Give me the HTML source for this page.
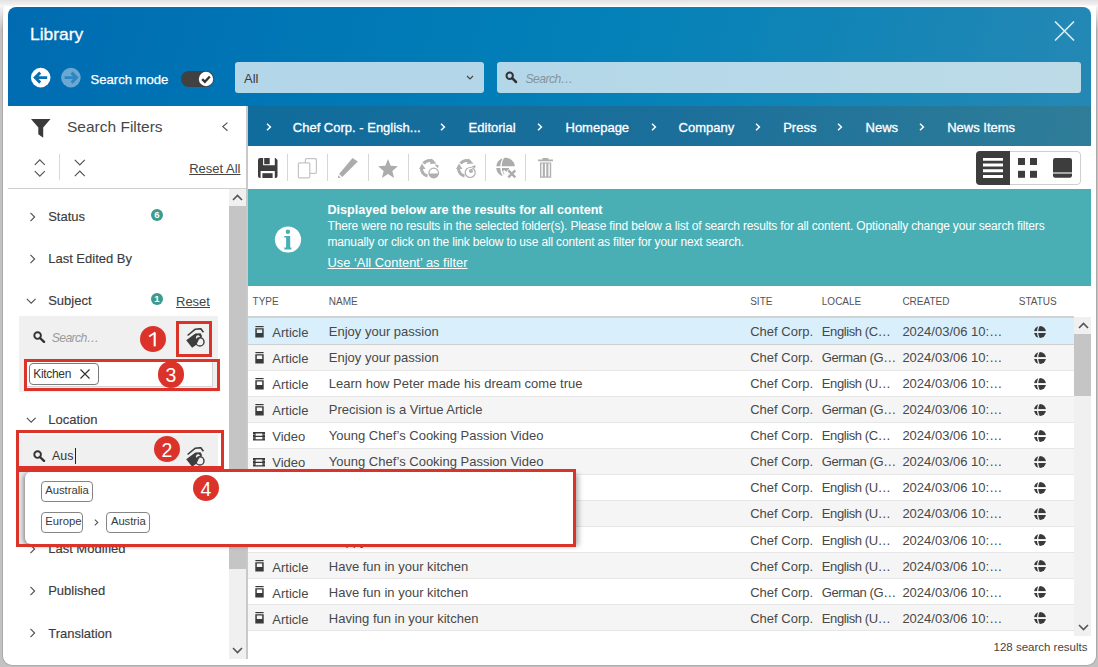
<!DOCTYPE html>
<html><head><meta charset="utf-8">
<style>
*{margin:0;padding:0;box-sizing:border-box}
html,body{width:1098px;height:667px;overflow:hidden;background:#c2c2c2;font-family:"Liberation Sans",sans-serif;color:#444}
.a{position:absolute}
.t{position:absolute;line-height:1;white-space:nowrap}
#frame{left:3px;top:-6px;width:1093px;height:670.5px;background:#fff;border-radius:9px;box-shadow:0 0 0 0.8px #a4a4a4}
#ftop{left:0;top:0;width:1098px;height:7px;background:linear-gradient(#e2e2e2,#ececec 45%,#f3f3f3 75%,#fff 90%)}
#hdr{left:8px;top:7px;width:1083px;height:99px;border-radius:8px 8px 0 0;background:linear-gradient(105deg,#006bb1 0%,#0078b6 30%,#0381b8 55%,#1585b6 80%,#2588b4 100%)}
#side{left:8px;top:106px;width:238px;height:553px;background:#fff}
#sideb{left:246px;top:106px;width:2px;height:553px;background:#c9c9c9}
#crumb{left:248px;top:106px;width:843px;height:40.5px;background:linear-gradient(100deg,#106c9c 0%,#1b6f9a 50%,#2f7d98 100%)}
#tool{left:248px;top:146px;width:843px;height:43px;background:#fff}
#banner{left:248px;top:189px;width:843px;height:97px;background:#49afb5}
.crumbt{color:#fff;font-size:13px;-webkit-text-stroke:0.3px #fff}
.hd{font-size:10px;color:#555}
.row{position:absolute;left:248px;width:826px;height:26px;border-bottom:1px solid #e6e6e6}
.rt{font-size:13px;color:#484848}
.sitem{font-size:13px;color:#3c3c3c;-webkit-text-stroke:0.15px #3c3c3c}
.red{position:absolute;border:3px solid #db3329}
.num{position:absolute;width:26.4px;height:26.4px;border-radius:13.2px;background:#db3329;color:#fff;font-size:19.5px;line-height:28px;text-align:center;font-weight:normal}
</style></head><body>
<div id="frame" class="a"></div><div id="ftop" class="a"></div><div class="a" style="left:0;top:6px;width:3.5px;height:24px;background:linear-gradient(#f4f4f4,rgba(244,244,244,0))"></div><div class="a" style="left:1095.5px;top:6px;width:2.5px;height:24px;background:linear-gradient(#f4f4f4,rgba(244,244,244,0))"></div>
<svg class="a" width="0" height="0" style="left:0;top:0"><defs><mask id="gm" maskUnits="userSpaceOnUse" x="0" y="0" width="12" height="12"><circle cx="6" cy="6" r="6" fill="#fff"/><rect x="0" y="5.1" width="12" height="1.9" fill="#000"/><path d="M5.1 -0.3Q2.0 6 5.1 12.3" stroke="#000" stroke-width="1.2" fill="none"/></mask></defs></svg>
<div id="hdr" class="a"></div>
<div class="t" style="left:30px;top:25.5px;font-size:17.4px;color:#fff;-webkit-text-stroke:0.3px #fff">Library</div>
<svg class="a" style="left:1054px;top:21px" width="21" height="20" viewBox="0 0 21 20"><path d="M1 0.5L20 19.5M20 0.5L1 19.5" stroke="#dcebf3" stroke-width="1.6"/></svg>
<svg class="a" style="left:30px;top:67px" width="22" height="22" viewBox="0 0 22 22"><circle cx="10.7" cy="10.6" r="9.8" fill="#fff"/><path d="M17.2 10.6H6M10.2 5.6L5.2 10.6L10.2 15.6" stroke="#0a70b2" stroke-width="2.9" fill="none" stroke-linejoin="miter"/></svg>
<svg class="a" style="left:60px;top:67px" width="22" height="22" viewBox="0 0 22 22"><circle cx="10.9" cy="10.6" r="9.8" fill="#6aa8d3"/><path d="M4.6 10.6H15.8M11.6 5.6L16.6 10.6L11.6 15.6" stroke="#2b86c2" stroke-width="2.9" fill="none"/></svg>
<div class="t" style="left:90.5px;top:73px;font-size:13.1px;color:#fff;-webkit-text-stroke:0.25px #fff">Search mode</div>
<div class="a" style="left:181px;top:71px;width:33px;height:16px;border-radius:8px;background:#414141"></div>
<svg class="a" style="left:198px;top:71px" width="16" height="16" viewBox="0 0 16 16"><circle cx="8" cy="8" r="7.2" fill="#fff"/><path d="M4.2 8.1L6.9 10.8L11.8 5.5" stroke="#333" stroke-width="2.3" fill="none"/></svg>
<div class="a" style="left:235px;top:62px;width:249px;height:31px;border-radius:3px;background:#b3d7e9"></div>
<div class="t" style="left:244px;top:72px;font-size:13px;color:#3a3a3a">All</div>
<svg class="a" style="left:466px;top:74.5px" width="8" height="6" viewBox="0 0 8 6"><path d="M1 1L4 4L7 1" stroke="#444" stroke-width="1.2" fill="none"/></svg>
<div class="a" style="left:497px;top:62px;width:584px;height:31px;border-radius:3px;background:linear-gradient(90deg,#b3d7e9,#bddbe7)"></div>
<svg class="a" style="left:504.5px;top:70.5px" width="13" height="13" viewBox="0 0 13 13"><circle cx="4.7" cy="4.7" r="3.2" stroke="#333" stroke-width="2" fill="none"/><path d="M7.2 7.2L11 11" stroke="#333" stroke-width="2.5" stroke-linecap="round"/></svg>
<div class="t" style="left:525.5px;top:72.8px;font-size:12.2px;letter-spacing:-0.55px;color:#85939b;font-style:italic">Search…</div>
<div id="side" class="a"></div>
<div id="sideb" class="a"></div>
<svg class="a" style="left:31px;top:119px" width="20" height="19" viewBox="0 0 20 19"><path fill="#3a3a3a" d="M0 0H19.5L12.2 8.6V18.8L7.3 15.2V8.6Z"/></svg>
<div class="t" style="left:67px;top:118.7px;font-size:15.5px;color:#474747">Search Filters</div>
<svg class="a" style="left:221px;top:122px" width="8" height="10" viewBox="0 0 8 10"><path d="M6.5 0.6L1.8 4.6L6.5 8.8" stroke="#555" stroke-width="1.2" fill="none"/></svg>
<svg class="a" style="left:34px;top:158px" width="12" height="20" viewBox="0 0 12 20"><path d="M0.8 6.8L5.8 1.8L10.8 6.8M0.8 13.2L5.8 18.2L10.8 13.2" stroke="#555" stroke-width="1.2" fill="none"/></svg>
<div class="a" style="left:59px;top:154px;width:1px;height:26px;background:#d8d8d8"></div>
<svg class="a" style="left:74px;top:158px" width="12" height="20" viewBox="0 0 12 20"><path d="M0.8 1.8L5.8 6.8L10.8 1.8M0.8 18.2L5.8 13.2L10.8 18.2" stroke="#555" stroke-width="1.2" fill="none"/></svg>
<div class="t" style="left:189.2px;top:162px;font-size:13px;color:#444;text-decoration:underline">Reset All</div>
<div class="a" style="left:8px;top:188px;width:238px;height:1px;background:#cfcfcf"></div>
<div class="a" style="left:229px;top:189px;width:17px;height:470px;background:#f0f0f0"></div>
<div class="a" style="left:229px;top:206px;width:17px;height:363px;background:#c5c5c5"></div>
<svg class="a" style="left:232px;top:193px" width="11" height="9" viewBox="0 0 11 9"><path d="M1 7L5.5 2.5L10 7" stroke="#555" stroke-width="1.6" fill="none"/></svg>
<svg class="a" style="left:232px;top:646px" width="11" height="9" viewBox="0 0 11 9"><path d="M1 2L5.5 6.5L10 2" stroke="#555" stroke-width="1.6" fill="none"/></svg>
<svg class="a" style="left:28.5px;top:212.0px" width="8" height="10" viewBox="0 0 8 10"><path d="M1.5 0.8L5.6 5L1.5 9.2" stroke="#555" stroke-width="1.2" fill="none"/></svg><div class="t sitem" style="left:48.2px;top:210.2px">Status</div><div class="a" style="left:151px;top:209px;width:12px;height:12px;border-radius:6px;background:#3c9a8f;color:#fff;font-size:9.6px;font-weight:bold;line-height:12.6px;text-align:center">6</div><svg class="a" style="left:28.5px;top:254.0px" width="8" height="10" viewBox="0 0 8 10"><path d="M1.5 0.8L5.6 5L1.5 9.2" stroke="#555" stroke-width="1.2" fill="none"/></svg><div class="t sitem" style="left:48.2px;top:252.2px">Last Edited By</div><svg class="a" style="left:26.3px;top:297.5px" width="11" height="7" viewBox="0 0 11 7"><path d="M0.8 0.8L5.2 5.2L9.6 0.8" stroke="#555" stroke-width="1.2" fill="none"/></svg><div class="t sitem" style="left:48.2px;top:294.2px">Subject</div><div class="a" style="left:151px;top:293.2px;width:12px;height:12px;border-radius:6px;background:#3c9a8f;color:#fff;font-size:9.6px;font-weight:bold;line-height:12.6px;text-align:center">1</div><div class="t" style="left:176px;top:294.6px;font-size:13px;color:#444;text-decoration:underline">Reset</div><div class="a" style="left:19px;top:316px;width:199px;height:76px;background:#f0f0f0"></div><svg class="a" style="left:33.0px;top:331.0px" width="13" height="12" viewBox="0 0 13 12"><circle cx="4.6" cy="4.6" r="3.3" stroke="#333" stroke-width="1.9" fill="none"/><path d="M7 7L11 10.8" stroke="#333" stroke-width="2.4" stroke-linecap="round"/></svg><div class="t" style="left:51.7px;top:331.6px;font-size:12.2px;letter-spacing:-0.6px;font-style:italic;color:#9a9a9a">Search…</div><svg class="a" style="left:185.7px;top:328.0px" width="22" height="22" viewBox="0 0 22 22"><path d="M1.6 7.5L9.3 1.2L14.8 0.7L17.4 4.3" stroke="#3d3d3d" stroke-width="1.6" fill="none" stroke-linejoin="round"/><path fill="#3d3d3d" fill-rule="evenodd" d="M0.2 12.2L9.3 5.4L14.6 5.2L16.2 8.2L11.2 12.5L10 17L6.1 19.7Z M12 7.3A2.1 2.3 0 1 0 12.01 7.3Z"/><circle cx="13.9" cy="13.9" r="4.1" fill="none" stroke="#3d3d3d" stroke-width="1.4"/><path d="M10.2 15.5L12.6 10.2" stroke="#3d3d3d" stroke-width="1.6"/></svg><div class="a" style="left:27px;top:362px;width:186px;height:25px;background:#fff;border-bottom:1px solid #d4d4d4;border-right:1px solid #d4d4d4"></div><div class="a" style="left:29px;top:363px;width:70px;height:22px;border:1px solid #7a7a7a;border-radius:4px;background:#fff"></div><div class="t" style="left:33.2px;top:367.8px;font-size:12px;letter-spacing:-0.3px;color:#333">Kitchen</div><svg class="a" style="left:80px;top:369px" width="10" height="10" viewBox="0 0 10 10"><path d="M0.5 0.5L9.5 9.5M9.5 0.5L0.5 9.5" stroke="#333" stroke-width="1.2"/></svg><svg class="a" style="left:26.3px;top:417.0px" width="11" height="7" viewBox="0 0 11 7"><path d="M0.8 0.8L5.2 5.2L9.6 0.8" stroke="#555" stroke-width="1.2" fill="none"/></svg><div class="t sitem" style="left:48.3px;top:413px">Location</div><div class="a" style="left:19px;top:434.5px;width:199px;height:34px;background:#f0f0f0"></div><svg class="a" style="left:33.0px;top:450.0px" width="13" height="12" viewBox="0 0 13 12"><circle cx="4.6" cy="4.6" r="3.3" stroke="#333" stroke-width="1.9" fill="none"/><path d="M7 7L11 10.8" stroke="#333" stroke-width="2.4" stroke-linecap="round"/></svg><div class="t" style="left:52px;top:450.3px;font-size:12.4px;color:#333">Aus</div><div class="a" style="left:74.5px;top:448px;width:1px;height:15.5px;background:#222"></div><svg class="a" style="left:185.7px;top:447.0px" width="22" height="22" viewBox="0 0 22 22"><path d="M1.6 7.5L9.3 1.2L14.8 0.7L17.4 4.3" stroke="#3d3d3d" stroke-width="1.6" fill="none" stroke-linejoin="round"/><path fill="#3d3d3d" fill-rule="evenodd" d="M0.2 12.2L9.3 5.4L14.6 5.2L16.2 8.2L11.2 12.5L10 17L6.1 19.7Z M12 7.3A2.1 2.3 0 1 0 12.01 7.3Z"/><circle cx="13.9" cy="13.9" r="4.1" fill="none" stroke="#3d3d3d" stroke-width="1.4"/><path d="M10.2 15.5L12.6 10.2" stroke="#3d3d3d" stroke-width="1.6"/></svg><svg class="a" style="left:28.5px;top:544.0px" width="8" height="10" viewBox="0 0 8 10"><path d="M1.5 0.8L5.6 5L1.5 9.2" stroke="#555" stroke-width="1.2" fill="none"/></svg><div class="t sitem" style="left:48.2px;top:542px">Last Modified</div><svg class="a" style="left:28.5px;top:586.0px" width="8" height="10" viewBox="0 0 8 10"><path d="M1.5 0.8L5.6 5L1.5 9.2" stroke="#555" stroke-width="1.2" fill="none"/></svg><div class="t sitem" style="left:48.2px;top:584px">Published</div><svg class="a" style="left:28.5px;top:627.6px" width="8" height="10" viewBox="0 0 8 10"><path d="M1.5 0.8L5.6 5L1.5 9.2" stroke="#555" stroke-width="1.2" fill="none"/></svg><div class="t sitem" style="left:48.2px;top:626.5px">Translation</div>
<div id="crumb" class="a"></div>
<div id="tool" class="a"></div>
<div id="banner" class="a"></div>
<svg class="a" style="left:265.5px;top:123px" width="6" height="8" viewBox="0 0 6 8"><path d="M1 0.8L4.4 4L1 7.2" stroke="#fff" stroke-width="1.5" fill="none"/></svg>
<div class="t crumbt" style="left:292.8px;top:121.3px">Chef Corp. - English...</div>
<svg class="a" style="left:440.0px;top:123px" width="6" height="8" viewBox="0 0 6 8"><path d="M1 0.8L4.4 4L1 7.2" stroke="#fff" stroke-width="1.5" fill="none"/></svg>
<div class="t crumbt" style="left:468.6px;top:121.3px">Editorial</div>
<svg class="a" style="left:536.7px;top:123px" width="6" height="8" viewBox="0 0 6 8"><path d="M1 0.8L4.4 4L1 7.2" stroke="#fff" stroke-width="1.5" fill="none"/></svg>
<div class="t crumbt" style="left:565.5px;top:121.3px">Homepage</div>
<svg class="a" style="left:650.7px;top:123px" width="6" height="8" viewBox="0 0 6 8"><path d="M1 0.8L4.4 4L1 7.2" stroke="#fff" stroke-width="1.5" fill="none"/></svg>
<div class="t crumbt" style="left:678.6px;top:121.3px">Company</div>
<svg class="a" style="left:755.3px;top:123px" width="6" height="8" viewBox="0 0 6 8"><path d="M1 0.8L4.4 4L1 7.2" stroke="#fff" stroke-width="1.5" fill="none"/></svg>
<div class="t crumbt" style="left:783.2px;top:121.3px">Press</div>
<svg class="a" style="left:836.5px;top:123px" width="6" height="8" viewBox="0 0 6 8"><path d="M1 0.8L4.4 4L1 7.2" stroke="#fff" stroke-width="1.5" fill="none"/></svg>
<div class="t crumbt" style="left:865.6px;top:121.3px">News</div>
<svg class="a" style="left:919.0px;top:123px" width="6" height="8" viewBox="0 0 6 8"><path d="M1 0.8L4.4 4L1 7.2" stroke="#fff" stroke-width="1.5" fill="none"/></svg>
<div class="t crumbt" style="left:947.2px;top:121.3px">News Items</div>
<svg class="a" style="left:258px;top:158px" width="20" height="20" viewBox="0 0 20 20"><path fill="#3d3d3d" fill-rule="evenodd" d="M2 0H17.5L19.5 2V18A2 2 0 0 1 17.5 20H2A2 2 0 0 1 0 18V2A2 2 0 0 1 2 0ZM5.1 0V7.3H16.8V0ZM2.6 13.1V20H16.8V13.1Z"/><rect x="6.2" y="0" width="5.5" height="6.2" fill="#3d3d3d"/><rect x="4.4" y="15.2" width="10.2" height="4.8" fill="#3d3d3d"/></svg>
<div class="a" style="left:287px;top:154px;width:1px;height:27px;background:#d6d6d6"></div>
<svg class="a" style="left:297px;top:157px" width="22" height="22" viewBox="0 0 22 22"><rect x="8.4" y="1.6" width="11" height="14.8" rx="1.2" fill="#fff" stroke="#c4c4c4" stroke-width="1.2"/><rect x="1.4" y="5.9" width="11.4" height="15" rx="1.2" fill="#fff" stroke="#c4c4c4" stroke-width="1.2"/></svg>
<div class="a" style="left:327px;top:154px;width:1px;height:27px;background:#d6d6d6"></div>
<svg class="a" style="left:338px;top:158px" width="20" height="20" viewBox="0 0 20 20"><path fill="#acacac" d="M14.5 0L19.8 3.4L4.3 18.9L1.1 16.1Z"/><path fill="#acacac" d="M0.2 17.2L2.8 19.8L0 20Z"/></svg>
<div class="a" style="left:368px;top:154px;width:1px;height:27px;background:#d6d6d6"></div>
<svg class="a" style="left:378px;top:158px" width="20" height="20" viewBox="0 0 20 20"><path fill="#acacac" d="M10.00 1.10L12.70 7.78L19.89 8.29L14.37 12.92L16.11 19.91L10.00 16.10L3.89 19.91L5.63 12.92L0.11 8.29L7.30 7.78Z"/></svg>
<div class="a" style="left:408px;top:154px;width:1px;height:27px;background:#d6d6d6"></div>
<svg class="a" style="left:419px;top:158px" width="21" height="21" viewBox="0 0 21 21"><path d="M4.5 5.5A7.5 7.5 0 0 1 14 3.5" stroke="#b0b0b0" stroke-width="3" fill="none"/><path d="M12.5 0.5L17.5 5.5L11 6Z" fill="#b0b0b0"/><path d="M8.5 18A7.5 7.5 0 0 1 2.5 10" stroke="#b0b0b0" stroke-width="3" fill="none"/><path d="M0 11L3 5.5L6.5 11Z" fill="#b0b0b0"/><circle cx="14.7" cy="15" r="4.8" fill="#fff" stroke="#b0b0b0" stroke-width="1.2"/><path d="M10 15.5A4.7 4.7 0 0 0 19.4 15.5Z" fill="#b0b0b0"/><path d="M15.5 6.5L19.5 7L19 10.5Z" fill="#b0b0b0"/></svg>
<svg class="a" style="left:456px;top:158px" width="21" height="21" viewBox="0 0 21 21"><path d="M4.5 5.5A7.5 7.5 0 0 1 14 3.5" stroke="#b0b0b0" stroke-width="3" fill="none"/><path d="M12.5 0.5L17.5 5.5L11 6Z" fill="#b0b0b0"/><path d="M8.5 18A7.5 7.5 0 0 1 2.5 10" stroke="#b0b0b0" stroke-width="3" fill="none"/><path d="M0 11L3 5.5L6.5 11Z" fill="#b0b0b0"/><circle cx="14.2" cy="14.5" r="5" fill="#fff" stroke="#b0b0b0" stroke-width="1.2"/><circle cx="15" cy="13" r="2" fill="#b0b0b0"/><path d="M15.5 8.5L19.5 7L19 10.5Z" fill="#b0b0b0"/></svg>
<div class="a" style="left:485px;top:154px;width:1px;height:27px;background:#d6d6d6"></div>
<svg class="a" style="left:496px;top:157px" width="22" height="22" viewBox="0 0 22 22" overflow="visible"><path fill="#acacac" d="M6.8 1.3A9.6 9.6 0 0 0 0.2 9.2H4.2A16 16 0 0 1 6.8 1.3Z M8.3 0.8A12 12 0 0 0 5.8 9.2H18.9A9.6 9.6 0 0 0 8.3 0.8Z M0.2 11A9.6 9.6 0 0 0 6.8 19.2A16 16 0 0 1 4.2 11Z M5.8 11A12 12 0 0 0 7.8 17.6L8.6 16.5L6.8 14.6L8.4 13L10.3 14.9L12.2 13L13 13.8L13 11Z"/><path d="M12 13L19.5 20.5M19.5 13L12 20.5" stroke="#fff" stroke-width="4.5"/><path d="M12.3 13.3L19.3 20.3M19.3 13.3L12.3 20.3" stroke="#acacac" stroke-width="2.4"/></svg>
<div class="a" style="left:525px;top:154px;width:1px;height:27px;background:#d6d6d6"></div>
<svg class="a" style="left:538px;top:158px" width="16" height="20" viewBox="0 0 16 20"><path fill="#b0b0b0" d="M0 1.5H15V3.2H0Z M4.5 0H10.5V1.5H4.5Z"/><path fill="#b0b0b0" fill-rule="evenodd" d="M2 4.5H13.2V19.8H2Z M3.4 5.5V18.6H4.8V5.5Z M6.9 5.5V18.6H8.3V5.5Z M10.4 5.5V18.6H11.8V5.5Z"/></svg>
<div class="a" style="left:976px;top:151px;width:105px;height:34px;border:1px solid #cfcfcf;border-radius:4px;background:#fff"></div>
<div class="a" style="left:976px;top:151px;width:34px;height:34px;border-radius:4px 0 0 4px;background:#3d3d3d"></div>
<svg class="a" style="left:983px;top:158px" width="21" height="20" viewBox="0 0 21 20"><path d="M0 1.2H20M0 7H20M0 12.8H20M0 18.4H20" stroke="#fff" stroke-width="3"/></svg>
<svg class="a" style="left:1018px;top:158px" width="20" height="20" viewBox="0 0 20 20"><rect x="0" y="0" width="7" height="7" fill="#3d3d3d"/><rect x="12" y="0" width="7" height="7" fill="#3d3d3d"/><rect x="0" y="12.8" width="7" height="7" fill="#3d3d3d"/><rect x="12" y="12.8" width="7" height="7" fill="#3d3d3d"/></svg>
<svg class="a" style="left:1053px;top:158px" width="19" height="20" viewBox="0 0 19 20"><rect x="0" y="0" width="19" height="19.8" rx="2.2" fill="#3d3d3d"/><rect x="0" y="14" width="19" height="2" fill="#a6a6a6"/></svg>


<svg class="a" style="left:274px;top:226px" width="28" height="28" viewBox="0 0 28 28"><circle cx="14" cy="13.5" r="13.1" fill="#fff"/><circle cx="13.9" cy="5.7" r="2.2" fill="#49afb5"/><path fill="#49afb5" d="M10.3 10H16.2V21.5H17.4V23.6H10.3V21.5H12.1V11.4H10.3Z"/></svg>
<div class="t" style="left:327.5px;top:204.2px;font-size:12.6px;font-weight:bold;color:#fff">Displayed below are the results for all content</div>
<div class="t" style="left:327.5px;top:220px;font-size:12px;letter-spacing:-0.16px;color:#fff">There were no results in the selected folder(s). Please find below a list of search results for all content. Optionally change your search filters</div>
<div class="t" style="left:327.5px;top:235.8px;font-size:12px;letter-spacing:-0.16px;color:#fff">manually or click on the link below to use all content as filter for your next search.</div>
<div class="t" style="left:327.5px;top:257.1px;font-size:12.9px;color:#fff;text-decoration:underline">Use ‘All Content’ as filter</div>
<div class="t hd" style="left:252.6px;top:297px">TYPE</div>
<div class="t hd" style="left:328.8px;top:297px">NAME</div>
<div class="t hd" style="left:750.2px;top:297px">SITE</div>
<div class="t hd" style="left:821.8px;top:297px">LOCALE</div>
<div class="t hd" style="left:902.4px;top:297px">CREATED</div>
<div class="t hd" style="left:1018.8px;top:297px">STATUS</div>
<div class="a" style="left:248px;top:316px;width:826px;height:2px;background:#d2d2d2"></div>
<div class="row" style="top:318px;height:27px;border-bottom-color:#cfcfcf;background:#d9effb"></div>
<svg class="a" style="left:254.5px;top:326.0px" width="9" height="12" viewBox="0 0 9 12"><rect x="0.4" y="0" width="8.2" height="1.2" fill="#3a3a3a"/><path fill="#3a3a3a" fill-rule="evenodd" d="M0.3 2.2H8.7V11.6H0.3Z M1.8 3.6V7.1H7.2V3.6Z"/></svg>
<div class="t rt" style="left:272.3px;top:326.00px">Article</div>
<div class="t rt" style="left:328.8px;top:324.90px">Enjoy your passion</div>
<div class="t rt" style="left:750.2px;top:324.90px">Chef Corp.</div>
<div class="t rt" style="left:821.8px;top:324.90px;letter-spacing:-0.4px">English (C…</div>
<div class="t rt" style="left:902.4px;top:324.90px">2024/03/06 10:…</div>
<svg class="a" style="left:1034px;top:326.0px" width="12" height="12" viewBox="0 0 12 12"><rect width="12" height="12" fill="#3a3a3a" mask="url(#gm)"/></svg>
<div class="row" style="top:345px;background:#f5f5f5"></div>
<svg class="a" style="left:254.5px;top:352.0px" width="9" height="12" viewBox="0 0 9 12"><rect x="0.4" y="0" width="8.2" height="1.2" fill="#3a3a3a"/><path fill="#3a3a3a" fill-rule="evenodd" d="M0.3 2.2H8.7V11.6H0.3Z M1.8 3.6V7.1H7.2V3.6Z"/></svg>
<div class="t rt" style="left:272.3px;top:352.07px">Article</div>
<div class="t rt" style="left:328.8px;top:350.98px">Enjoy your passion</div>
<div class="t rt" style="left:750.2px;top:350.98px">Chef Corp.</div>
<div class="t rt" style="left:821.8px;top:350.98px;letter-spacing:-0.4px">German (G…</div>
<div class="t rt" style="left:902.4px;top:350.98px">2024/03/06 10:…</div>
<svg class="a" style="left:1034px;top:352.0px" width="12" height="12" viewBox="0 0 12 12"><rect width="12" height="12" fill="#3a3a3a" mask="url(#gm)"/></svg>
<div class="row" style="top:371px;background:#fff"></div>
<svg class="a" style="left:254.5px;top:378.0px" width="9" height="12" viewBox="0 0 9 12"><rect x="0.4" y="0" width="8.2" height="1.2" fill="#3a3a3a"/><path fill="#3a3a3a" fill-rule="evenodd" d="M0.3 2.2H8.7V11.6H0.3Z M1.8 3.6V7.1H7.2V3.6Z"/></svg>
<div class="t rt" style="left:272.3px;top:378.14px">Article</div>
<div class="t rt" style="left:328.8px;top:377.06px">Learn how Peter made his dream come true</div>
<div class="t rt" style="left:750.2px;top:377.06px">Chef Corp.</div>
<div class="t rt" style="left:821.8px;top:377.06px;letter-spacing:-0.4px">English (U…</div>
<div class="t rt" style="left:902.4px;top:377.06px">2024/03/06 10:…</div>
<svg class="a" style="left:1034px;top:378.0px" width="12" height="12" viewBox="0 0 12 12"><rect width="12" height="12" fill="#3a3a3a" mask="url(#gm)"/></svg>
<div class="row" style="top:397px;background:#f5f5f5"></div>
<svg class="a" style="left:254.5px;top:404.0px" width="9" height="12" viewBox="0 0 9 12"><rect x="0.4" y="0" width="8.2" height="1.2" fill="#3a3a3a"/><path fill="#3a3a3a" fill-rule="evenodd" d="M0.3 2.2H8.7V11.6H0.3Z M1.8 3.6V7.1H7.2V3.6Z"/></svg>
<div class="t rt" style="left:272.3px;top:404.21px">Article</div>
<div class="t rt" style="left:328.8px;top:403.14px">Precision is a Virtue Article</div>
<div class="t rt" style="left:750.2px;top:403.14px">Chef Corp.</div>
<div class="t rt" style="left:821.8px;top:403.14px;letter-spacing:-0.4px">German (G…</div>
<div class="t rt" style="left:902.4px;top:403.14px">2024/03/06 10:…</div>
<svg class="a" style="left:1034px;top:404.0px" width="12" height="12" viewBox="0 0 12 12"><rect width="12" height="12" fill="#3a3a3a" mask="url(#gm)"/></svg>
<div class="row" style="top:423px;background:#fff"></div>
<svg class="a" style="left:253px;top:432.0px" width="12" height="9" viewBox="0 0 12 9"><path fill="#3a3a3a" fill-rule="evenodd" d="M0 0H12V8.6H0Z M2.6 1.4V3.7H9.4V1.4Z M2.6 4.9V7.2H9.4V4.9Z"/><path d="M0.3 2.5H1.5M0.3 6H1.5M10.5 2.5H11.7M10.5 6H11.7" stroke="#fff" stroke-width="0.7"/></svg>
<div class="t rt" style="left:272.3px;top:430.28px">Video</div>
<div class="t rt" style="left:328.8px;top:429.22px">Young Chef’s Cooking Passion Video</div>
<div class="t rt" style="left:750.2px;top:429.22px">Chef Corp.</div>
<div class="t rt" style="left:821.8px;top:429.22px;letter-spacing:-0.4px">English (C…</div>
<div class="t rt" style="left:902.4px;top:429.22px">2024/03/06 10:…</div>
<svg class="a" style="left:1034px;top:430.0px" width="12" height="12" viewBox="0 0 12 12"><rect width="12" height="12" fill="#3a3a3a" mask="url(#gm)"/></svg>
<div class="row" style="top:449px;background:#f5f5f5"></div>
<svg class="a" style="left:253px;top:458.0px" width="12" height="9" viewBox="0 0 12 9"><path fill="#3a3a3a" fill-rule="evenodd" d="M0 0H12V8.6H0Z M2.6 1.4V3.7H9.4V1.4Z M2.6 4.9V7.2H9.4V4.9Z"/><path d="M0.3 2.5H1.5M0.3 6H1.5M10.5 2.5H11.7M10.5 6H11.7" stroke="#fff" stroke-width="0.7"/></svg>
<div class="t rt" style="left:272.3px;top:456.35px">Video</div>
<div class="t rt" style="left:328.8px;top:455.30px">Young Chef’s Cooking Passion Video</div>
<div class="t rt" style="left:750.2px;top:455.30px">Chef Corp.</div>
<div class="t rt" style="left:821.8px;top:455.30px;letter-spacing:-0.4px">German (G…</div>
<div class="t rt" style="left:902.4px;top:455.30px">2024/03/06 10:…</div>
<svg class="a" style="left:1034px;top:456.0px" width="12" height="12" viewBox="0 0 12 12"><rect width="12" height="12" fill="#3a3a3a" mask="url(#gm)"/></svg>
<div class="row" style="top:475px;background:#fff"></div>
<svg class="a" style="left:254.5px;top:482.0px" width="9" height="12" viewBox="0 0 9 12"><rect x="0.4" y="0" width="8.2" height="1.2" fill="#3a3a3a"/><path fill="#3a3a3a" fill-rule="evenodd" d="M0.3 2.2H8.7V11.6H0.3Z M1.8 3.6V7.1H7.2V3.6Z"/></svg>
<div class="t rt" style="left:272.3px;top:482.42px">Article</div>
<div class="t rt" style="left:328.8px;top:481.38px">Cooking with passion</div>
<div class="t rt" style="left:750.2px;top:481.38px">Chef Corp.</div>
<div class="t rt" style="left:821.8px;top:481.38px;letter-spacing:-0.4px">English (U…</div>
<div class="t rt" style="left:902.4px;top:481.38px">2024/03/06 10:…</div>
<svg class="a" style="left:1034px;top:482.0px" width="12" height="12" viewBox="0 0 12 12"><rect width="12" height="12" fill="#3a3a3a" mask="url(#gm)"/></svg>
<div class="row" style="top:501px;background:#f5f5f5"></div>
<svg class="a" style="left:254.5px;top:508.0px" width="9" height="12" viewBox="0 0 9 12"><rect x="0.4" y="0" width="8.2" height="1.2" fill="#3a3a3a"/><path fill="#3a3a3a" fill-rule="evenodd" d="M0.3 2.2H8.7V11.6H0.3Z M1.8 3.6V7.1H7.2V3.6Z"/></svg>
<div class="t rt" style="left:272.3px;top:508.49px">Article</div>
<div class="t rt" style="left:328.8px;top:507.46px">Cooking with passion</div>
<div class="t rt" style="left:750.2px;top:507.46px">Chef Corp.</div>
<div class="t rt" style="left:821.8px;top:507.46px;letter-spacing:-0.4px">English (U…</div>
<div class="t rt" style="left:902.4px;top:507.46px">2024/03/06 10:…</div>
<svg class="a" style="left:1034px;top:508.0px" width="12" height="12" viewBox="0 0 12 12"><rect width="12" height="12" fill="#3a3a3a" mask="url(#gm)"/></svg>
<div class="row" style="top:527px;background:#fff"></div>
<svg class="a" style="left:254.5px;top:534.0px" width="9" height="12" viewBox="0 0 9 12"><rect x="0.4" y="0" width="8.2" height="1.2" fill="#3a3a3a"/><path fill="#3a3a3a" fill-rule="evenodd" d="M0.3 2.2H8.7V11.6H0.3Z M1.8 3.6V7.1H7.2V3.6Z"/></svg>
<div class="t rt" style="left:272.3px;top:534.56px">Article</div>
<div class="t rt" style="left:328.8px;top:533.54px">Happy Chef Article</div>
<div class="t rt" style="left:750.2px;top:533.54px">Chef Corp.</div>
<div class="t rt" style="left:821.8px;top:533.54px;letter-spacing:-0.4px">English (U…</div>
<div class="t rt" style="left:902.4px;top:533.54px">2024/03/06 10:…</div>
<svg class="a" style="left:1034px;top:534.0px" width="12" height="12" viewBox="0 0 12 12"><rect width="12" height="12" fill="#3a3a3a" mask="url(#gm)"/></svg>
<div class="row" style="top:553px;background:#f5f5f5"></div>
<svg class="a" style="left:254.5px;top:560.0px" width="9" height="12" viewBox="0 0 9 12"><rect x="0.4" y="0" width="8.2" height="1.2" fill="#3a3a3a"/><path fill="#3a3a3a" fill-rule="evenodd" d="M0.3 2.2H8.7V11.6H0.3Z M1.8 3.6V7.1H7.2V3.6Z"/></svg>
<div class="t rt" style="left:272.3px;top:560.63px">Article</div>
<div class="t rt" style="left:328.8px;top:559.62px">Have fun in your kitchen</div>
<div class="t rt" style="left:750.2px;top:559.62px">Chef Corp.</div>
<div class="t rt" style="left:821.8px;top:559.62px;letter-spacing:-0.4px">English (U…</div>
<div class="t rt" style="left:902.4px;top:559.62px">2024/03/06 10:…</div>
<svg class="a" style="left:1034px;top:560.0px" width="12" height="12" viewBox="0 0 12 12"><rect width="12" height="12" fill="#3a3a3a" mask="url(#gm)"/></svg>
<div class="row" style="top:579px;background:#fff"></div>
<svg class="a" style="left:254.5px;top:586.0px" width="9" height="12" viewBox="0 0 9 12"><rect x="0.4" y="0" width="8.2" height="1.2" fill="#3a3a3a"/><path fill="#3a3a3a" fill-rule="evenodd" d="M0.3 2.2H8.7V11.6H0.3Z M1.8 3.6V7.1H7.2V3.6Z"/></svg>
<div class="t rt" style="left:272.3px;top:586.70px">Article</div>
<div class="t rt" style="left:328.8px;top:585.70px">Have fun in your kitchen</div>
<div class="t rt" style="left:750.2px;top:585.70px">Chef Corp.</div>
<div class="t rt" style="left:821.8px;top:585.70px;letter-spacing:-0.4px">German (G…</div>
<div class="t rt" style="left:902.4px;top:585.70px">2024/03/06 10:…</div>
<svg class="a" style="left:1034px;top:586.0px" width="12" height="12" viewBox="0 0 12 12"><rect width="12" height="12" fill="#3a3a3a" mask="url(#gm)"/></svg>
<div class="row" style="top:605px;background:#f5f5f5"></div>
<svg class="a" style="left:254.5px;top:612.0px" width="9" height="12" viewBox="0 0 9 12"><rect x="0.4" y="0" width="8.2" height="1.2" fill="#3a3a3a"/><path fill="#3a3a3a" fill-rule="evenodd" d="M0.3 2.2H8.7V11.6H0.3Z M1.8 3.6V7.1H7.2V3.6Z"/></svg>
<div class="t rt" style="left:272.3px;top:612.77px">Article</div>
<div class="t rt" style="left:328.8px;top:611.78px">Having fun in your kitchen</div>
<div class="t rt" style="left:750.2px;top:611.78px">Chef Corp.</div>
<div class="t rt" style="left:821.8px;top:611.78px;letter-spacing:-0.4px">English (U…</div>
<div class="t rt" style="left:902.4px;top:611.78px">2024/03/06 10:…</div>
<svg class="a" style="left:1034px;top:612.0px" width="12" height="12" viewBox="0 0 12 12"><rect width="12" height="12" fill="#3a3a3a" mask="url(#gm)"/></svg>
<div class="a" style="left:1074px;top:317px;width:17px;height:319px;background:#f0f0f0"></div>
<div class="a" style="left:1074px;top:334px;width:17px;height:62px;background:#c5c5c5"></div>
<svg class="a" style="left:1078px;top:321px" width="11" height="9" viewBox="0 0 11 9"><path d="M1 7L5.5 2.5L10 7" stroke="#555" stroke-width="1.6" fill="none"/></svg>
<svg class="a" style="left:1078px;top:623px" width="11" height="9" viewBox="0 0 11 9"><path d="M1 2L5.5 6.5L10 2" stroke="#555" stroke-width="1.6" fill="none"/></svg>
<div class="red" style="left:176px;top:321px;width:36px;height:36px"></div><div class="num" style="left:139.8px;top:325.5px"><svg style="position:absolute;left:0;top:0" width="26.4" height="26.4" viewBox="0 0 26.4 26.4"><path d="M14.7 6.8V20.4" stroke="#fff" stroke-width="2.1" fill="none"/><path d="M15.3 6.6L9.1 10.5" stroke="#fff" stroke-width="1.8" fill="none"/></svg></div><div class="red" style="left:24px;top:359px;width:196px;height:32px"></div><div class="num" style="left:157.8px;top:361.3px">3</div><div class="red" style="left:16px;top:430px;width:208px;height:39px"></div><div class="num" style="left:153.8px;top:435.8px">2</div><div class="a" style="left:16px;top:469px;width:560px;height:78px;background:#e9e9e9"></div><div class="a" style="left:25px;top:471.5px;width:551px;height:72px;background:#fff;border-radius:6px 0 0 6px;box-shadow:-2px 1px 4px rgba(0,0,0,.35), 3px 2px 5px rgba(0,0,0,.25)"></div><div class="a" style="left:41.2px;top:481.0px;width:51.5px;height:21px;border:1px solid #858585;border-radius:4px;background:#fff"></div><div class="t" style="left:45.3px;top:485.2px;font-size:11.3px;color:#3a3a3a;letter-spacing:-0.05px">Australia</div><div class="a" style="left:41.2px;top:511.5px;width:42.3px;height:21px;border:1px solid #858585;border-radius:4px;background:#fff"></div><div class="t" style="left:45.3px;top:515.6px;font-size:11.3px;color:#3a3a3a;letter-spacing:-0.05px">Europe</div><svg class="a" style="left:93.5px;top:519px" width="5" height="7" viewBox="0 0 5 7"><path d="M0.8 0.6L3.8 3.5L0.8 6.4" stroke="#555" stroke-width="1.1" fill="none"/></svg><div class="a" style="left:106.2px;top:511.5px;width:43.5px;height:21px;border:1px solid #858585;border-radius:4px;background:#fff"></div><div class="t" style="left:110.9px;top:515.6px;font-size:11.3px;color:#3a3a3a;letter-spacing:-0.05px">Austria</div><div class="red" style="left:16px;top:469px;width:560px;height:78px"></div><div class="num" style="left:192.8px;top:474.8px">4</div>
<div class="t" style="left:993.5px;top:642px;font-size:11.5px;color:#444">128 search results</div>
</body></html>
